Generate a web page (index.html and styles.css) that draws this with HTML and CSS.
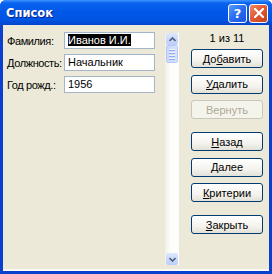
FILE: index.html
```html
<!DOCTYPE html>
<html lang="ru">

<head>
    <meta charset="UTF-8">
    <title>Список</title>
    <link rel="stylesheet" href="styles.css">
</head>

<body>
    <div class="window">
        <div class="titlebar">
            <span class="title">Список</span>
            <div class="title-buttons">
                <span class="tbtn help">?</span>
                <span class="tbtn close">
                    <svg width="10" height="10" viewBox="0 0 10 10">
                        <path d="M1 1 L9 9 M9 1 L1 9" stroke="#fff" stroke-width="2.2" stroke-linecap="square" />
                    </svg>
                </span>
            </div>
        </div>
        <div class="client">
            <div class="record">
                <div class="fields">
                    <span class="label">Фамилия:</span>
                    <div class="field"><span class="selected">Иванов И.И.</span></div>
                    <span class="label">Должность:</span>
                    <div class="field">Начальник</div>
                    <span class="label">Год рожд.:</span>
                    <div class="field">1956</div>
                </div>
                <div class="scrollbar">
                    <div class="sb-btn">
                        <svg width="7" height="5" viewBox="0 0 7 5">
                            <path d="M0.5 4 L3.5 1 L6.5 4" fill="none" stroke="#4d6185" stroke-width="1.6" />
                        </svg>
                    </div>
                    <div class="sb-thumb">
                        <span></span><span></span><span></span><span></span>
                    </div>
                    <div class="sb-track"></div>
                    <div class="sb-btn">
                        <svg width="7" height="5" viewBox="0 0 7 5">
                            <path d="M0.5 1 L3.5 4 L6.5 1" fill="none" stroke="#4d6185" stroke-width="1.6" />
                        </svg>
                    </div>
                </div>
            </div>
            <div class="actions">
                <div class="counter">1 из 11</div>
                <button class="btn">До<u>б</u>авить</button>
                <button class="btn"><u>У</u>далить</button>
                <button class="btn" disabled>Вернуть</button>
                <button class="btn group"><u>Н</u>азад</button>
                <button class="btn"><u>Д</u>алее</button>
                <button class="btn"><u>К</u>ритерии</button>
                <button class="btn group"><u>З</u>акрыть</button>
            </div>
        </div>
    </div>
</body>

</html>
```

FILE: styles.css
```css
body {
    margin: 0;
    font-family: "Liberation Sans", Arial, sans-serif;
    font-size: 11px;
    background-color: #fff;
}

.window {
    width: 272px;
    height: 274px;
    display: flex;
    flex-direction: column;
    background-color: #0a3fd0;
    border-radius: 6px 6px 0 0;
    overflow: hidden;
}

.titlebar {
    height: 25px;
    flex-shrink: 0;
    display: flex;
    align-items: center;
    justify-content: space-between;
    padding: 0 4px 0 6px;
    background: linear-gradient(to bottom, #3d95ff 0, #0a64f0 3px, #0058e8 45%, #0054e2 80%, #0044cc 100%);
}

.title {
    color: #fff;
    font-family: "DejaVu Sans", sans-serif;
    font-weight: bold;
    font-size: 11.5px;
    text-shadow: 1px 1px 0 #0a1e8c;
    margin-top: 1px;
}

.title-buttons {
    display: flex;
    gap: 2px;
    margin-top: 1px;
}

.tbtn {
    width: 17px;
    height: 17px;
    border: 1px solid #fff;
    border-radius: 3px;
    display: flex;
    align-items: center;
    justify-content: center;
    color: #fff;
    font-family: "DejaVu Sans", sans-serif;
    font-weight: bold;
    font-size: 13px;
}

.help {
    background: linear-gradient(135deg, #5a9bff 0, #2a6bf0 50%, #1a55dd 100%);
}

.close {
    background: linear-gradient(135deg, #f08a62 0, #e0582f 50%, #c8401c 100%);
}

.client {
    flex: 1;
    margin: 0 3px 3px;
    display: flex;
    background-color: #ece9d8;
    border-bottom: 2px solid #fbfaf5;
}

.record {
    display: flex;
    padding-left: 4px;
}

.fields {
    display: grid;
    grid-template-columns: 57px 91px;
    grid-auto-rows: 17px;
    row-gap: 5px;
    align-items: center;
    padding-top: 7px;
    margin-right: 10px;
    align-self: flex-start;
}

.label {
    color: #000;
    letter-spacing: -0.4px;
    white-space: nowrap;
}

.field {
    height: 17px;
    box-sizing: border-box;
    border: 1px solid #a5b5c9;
    background-color: #fff;
    padding-left: 3px;
    line-height: 15px;
    white-space: nowrap;
}

.selected {
    background-color: #000;
    color: #fff;
}

.scrollbar {
    width: 14px;
    margin: 8px 0 4px;
    display: flex;
    flex-direction: column;
    background: linear-gradient(to right, #f1efe6 0, #fdfdfb 40%, #fefefe 100%);
}

.sb-btn {
    height: 12px;
    margin: 0 1px;
    flex-shrink: 0;
    display: flex;
    align-items: center;
    justify-content: center;
    border-radius: 2px;
    background: linear-gradient(to bottom, #dde7fd, #bccffa);
}

.sb-thumb {
    height: 18px;
    margin: 0 1px;
    flex-shrink: 0;
    box-sizing: border-box;
    border: 1px solid #b6c9f6;
    border-radius: 2px;
    background: linear-gradient(to right, #c9d8fc, #d9e4fd);
    display: flex;
    flex-direction: column;
    align-items: center;
    justify-content: center;
    gap: 1px;
}

.sb-thumb span {
    width: 6px;
    height: 1px;
    background-color: #eef3fe;
    border-bottom: 1px solid #8faaf0;
}

.sb-track {
    flex: 1;
}

.actions {
    width: 72px;
    padding-left: 12px;
    display: flex;
    flex-direction: column;
}

.counter {
    text-align: center;
    line-height: 13px;
    margin-top: 7px;
    margin-bottom: 4px;
}

.btn {
    height: 19px;
    margin-top: 6.5px;
    padding: 0;
    font-family: "Liberation Sans", Arial, sans-serif;
    font-size: 11px;
    color: #000;
    border: 1px solid #003c74;
    border-radius: 3px;
    background: linear-gradient(to bottom, #ffffff 0, #f4f3ee 60%, #e3e1d6 100%);
}

.counter + .btn {
    margin-top: 0;
}

.btn.group {
    margin-top: 13px;
}

.btn:disabled {
    color: #aca899;
    border-color: #c9c7ba;
    background: #f5f4ea;
}
```
